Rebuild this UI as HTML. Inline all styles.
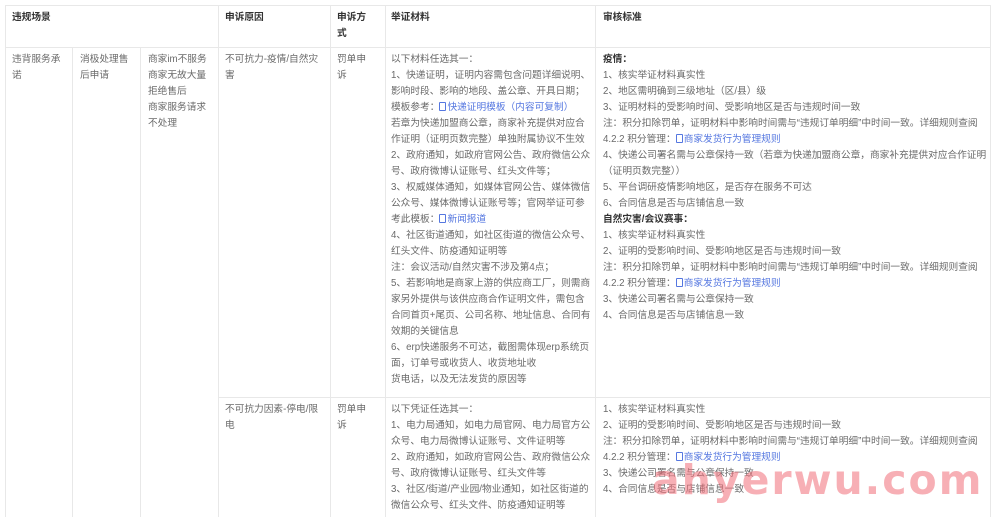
<!DOCTYPE html>
<html><head><meta charset="utf-8"><style>
*{margin:0;padding:0;box-sizing:border-box}
body{width:1000px;height:517px;background:#fff;overflow:hidden;position:relative;font-family:"Liberation Sans","Noto Sans CJK SC",sans-serif;font-size:9.7px;color:#6a6a6a;}
.c{position:absolute;line-height:16px;white-space:nowrap}
.h{font-weight:bold;color:#333}
.vl{position:absolute;width:1px;background:#e8e8e8}
.hl{position:absolute;height:1px;background:#e8e8e8}
a{color:#5577e0;text-decoration:none}
.ic{display:inline-block;width:7px;height:9px;border:1px solid #5577e0;border-radius:1px;margin-right:1px;vertical-align:-1px}
b{color:#333}
.wm{position:absolute;left:652px;top:456px;font-family:"DejaVu Sans",sans-serif;font-size:41px;font-weight:bold;letter-spacing:2px;color:rgba(240,110,120,0.55);white-space:nowrap}
</style></head><body>
<div class="hl" style="left:5px;width:985px;top:5px"></div>
<div class="hl" style="left:5px;width:985px;top:47px"></div>
<div class="hl" style="left:218px;width:772px;top:397px"></div>
<div class="vl" style="left:5px;top:5px;height:512px"></div>
<div class="vl" style="left:72px;top:47px;height:470px"></div>
<div class="vl" style="left:140px;top:47px;height:470px"></div>
<div class="vl" style="left:218px;top:5px;height:512px"></div>
<div class="vl" style="left:330px;top:5px;height:512px"></div>
<div class="vl" style="left:385px;top:5px;height:512px"></div>
<div class="vl" style="left:595px;top:5px;height:512px"></div>
<div class="vl" style="left:990px;top:5px;height:512px"></div>

<div class="c h" style="left:12px;top:10px">违规场景</div>
<div class="c h" style="left:225px;top:10px">申诉原因</div>
<div class="c h" style="left:337px;top:10px">申诉方<br>式</div>
<div class="c h" style="left:391px;top:10px">举证材料</div>
<div class="c h" style="left:603px;top:10px">审核标准</div>

<div class="c" style="left:12px;top:52px">违背服务承<br>诺</div>
<div class="c" style="left:80px;top:52px">消极处理售<br>后申请</div>
<div class="c" style="left:148px;top:52px">商家im不服务<br>商家无故大量<br>拒绝售后<br>商家服务请求<br>不处理</div>
<div class="c" style="left:225px;top:52px">不可抗力-疫情/自然灾<br>害</div>
<div class="c" style="left:337px;top:52px">罚单申<br>诉</div>
<div class="c" style="left:391px;top:52px">以下材料任选其一：<br>1、快递证明，证明内容需包含问题详细说明、<br>影响时段、影响的地段、盖公章、开具日期；<br>模板参考：<a><span class="ic"></span>快递证明模板（内容可复制）</a><br>若章为快递加盟商公章，商家补充提供对应合<br>作证明（证明页数完整）单独附属协议不生效<br>2、政府通知，如政府官网公告、政府微信公众<br>号、政府微博认证账号、红头文件等；<br>3、权威媒体通知，如媒体官网公告、媒体微信<br>公众号、媒体微博认证账号等；官网举证可参<br>考此模板：<a><span class="ic"></span>新闻报道</a><br>4、社区街道通知，如社区街道的微信公众号、<br>红头文件、防疫通知证明等<br>注：会议活动/自然灾害不涉及第4点；<br>5、若影响地是商家上游的供应商工厂，则需商<br>家另外提供与该供应商合作证明文件，需包含<br>合同首页+尾页、公司名称、地址信息、合同有<br>效期的关键信息<br>6、erp快递服务不可达，截图需体现erp系统页<br>面，订单号或收货人、收货地址收<br>货电话，以及无法发货的原因等</div>
<div class="c" style="left:603px;top:52px"><b>疫情：</b><br>1、核实举证材料真实性<br>2、地区需明确到三级地址（区/县）级<br>3、证明材料的受影响时间、受影响地区是否与违规时间一致<br>注：积分扣除罚单，证明材料中影响时间需与“违规订单明细”中时间一致。详细规则查阅<br>4.2.2 积分管理：<a><span class="ic"></span>商家发货行为管理规则</a><br>4、快递公司署名需与公章保持一致（若章为快递加盟商公章，商家补充提供对应合作证明<br>（证明页数完整））<br>5、平台调研疫情影响地区，是否存在服务不可达<br>6、合同信息是否与店铺信息一致<br><b>自然灾害/会议赛事：</b><br>1、核实举证材料真实性<br>2、证明的受影响时间、受影响地区是否与违规时间一致<br>注：积分扣除罚单，证明材料中影响时间需与“违规订单明细”中时间一致。详细规则查阅<br>4.2.2 积分管理：<a><span class="ic"></span>商家发货行为管理规则</a><br>3、快递公司署名需与公章保持一致<br>4、合同信息是否与店铺信息一致</div>

<div class="c" style="left:225px;top:402px">不可抗力因素-停电/限<br>电</div>
<div class="c" style="left:337px;top:402px">罚单申<br>诉</div>
<div class="c" style="left:391px;top:402px">以下凭证任选其一：<br>1、电力局通知，如电力局官网、电力局官方公<br>众号、电力局微博认证账号、文件证明等<br>2、政府通知，如政府官网公告、政府微信公众<br>号、政府微博认证账号、红头文件等<br>3、社区/街道/产业园/物业通知，如社区街道的<br>微信公众号、红头文件、防疫通知证明等</div>
<div class="c" style="left:603px;top:402px">1、核实举证材料真实性<br>2、证明的受影响时间、受影响地区是否与违规时间一致<br>注：积分扣除罚单，证明材料中影响时间需与“违规订单明细”中时间一致。详细规则查阅<br>4.2.2 积分管理：<a><span class="ic"></span>商家发货行为管理规则</a><br>3、快递公司署名需与公章保持一致<br>4、合同信息是否与店铺信息一致</div>

<div class="wm">ahyerwu.com</div>
</body></html>
